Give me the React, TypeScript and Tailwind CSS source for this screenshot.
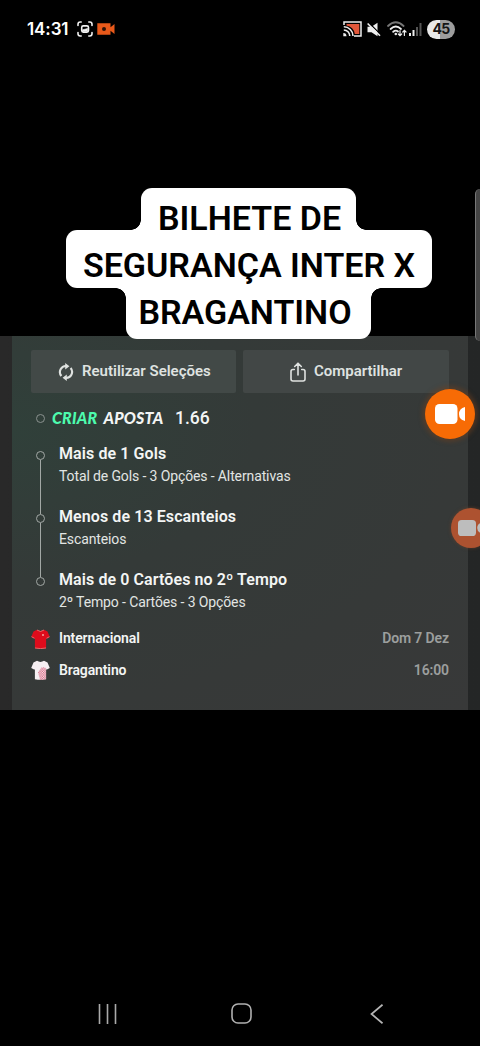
import React from 'react';

interface Selection {
  title: string;
  market: string;
}

const selections: Selection[] = [
  { title: 'Mais de 1 Gols', market: 'Total de Gols - 3 Opções - Alternativas' },
  { title: 'Menos de 13 Escanteios', market: 'Escanteios' },
  { title: 'Mais de 0 Cartões no 2º Tempo', market: '2º Tempo - Cartões - 3 Opções' },
];

function StatusBar() {
  return (
    <header className="flex h-[58px] shrink-0 items-center justify-between pl-[27px] pr-[25px]">
      <div className="flex items-center">
        <span className="w-[50px] font-['Inter'] text-[17px] font-semibold leading-none tracking-[-0.1px] text-white">14:31</span>
        {/* Screenshot */}
        <svg className="h-4 w-4" viewBox="0 0 16 16" fill="none" stroke="#f1f1f1" strokeWidth="1.6" strokeLinecap="round">
          <path d="M1 4.5V3.2Q1 1 3.2 1h1M11.8 1h1Q15 1 15 3.2v1.3M15 11.5v1.3q0 2.2-2.2 2.2h-1M4.2 15h-1Q1 15 1 12.8v-1.3" />
          <rect x="4.7" y="4.9" width="6.8" height="6.2" rx="1.6" />
          <path d="M5.5 10.200V8.800l2-.5 1.600-.4 1.400-.6v3z" fill="#f1f1f1" strokeWidth=".6" />
        </svg>
        <svg className="ml-[4px] h-[12px] w-[18px]" viewBox="0 0 18 12" fill="#e8591a">
          <path d="M.3.3h13.200v4L17.5 1v10l-4-3.300v4H.3z" />
          <circle cx="7" cy="6" r="2" fill="#2c1309" />
        </svg>
      </div>
      <div className="flex items-center">
        {/* Cast */}
        <svg className="h-[16px] w-[19px]" viewBox="0 0 19 16" fill="none">
          <path d="M1 4V1h17v14h-7" stroke="#eee" strokeWidth="1.5" />
          <path d="M3.5 3h12.800v10h-4.500Q10.500 5.500 3.500 4.500z" fill="#e2573a" />
          <path d="M.8 5.8A9.2 9.2 0 0 1 10 15M.8 9A6 6 0 0 1 6.8 15" stroke="#eee" strokeWidth="1.6" />
          <path d="M.3 12A3.3 3.3 0 0 1 3.5 15.3H.3z" fill="#eee" />
        </svg>
        {/* Muted */}
        <svg className="ml-[5px] h-[15px] w-[14px]" viewBox="0 0 14 15" fill="#eee">
          <path d="M.5 4.8h4L10.500.8v13.400L4.500 10.200h-4z" />
          <path d="M1.600.5 13.800 12.600" stroke="#000" strokeWidth="1.3" />
          <path d="M.6 1.500 13 13.800" stroke="#eee" strokeWidth="1.6" />
        </svg>
        {/* Wi-Fi */}
        <svg className="ml-[6px] h-[16px] w-[20px]" viewBox="0 0 20 16" fill="none" strokeWidth="1.8" strokeLinecap="round">
          <path d="M1 5Q8.8-2.5 16.6 5" stroke="#777" />
          <path d="M3.6 8Q8.8 3 14 8" stroke="#eee" />
          <path d="M6.2 10.800Q8.8 8.600 11 10.500" stroke="#eee" />
          <circle cx="8.8" cy="13" r="1.3" fill="#eee" />
          <path d="M13 9.500v5M11.300 13l1.700 1.700 1.700-1.700M17.400 14.500v-5M15.800 11l1.600-1.700L19 11" stroke="#eee" strokeWidth="1.2" />
        </svg>
        <svg className="ml-[2px] h-[13px] w-[13px]" viewBox="0 0 13 13">
          <path d="M0 10h2v3H0zM3.500 7h2v6h-2z" fill="#eee" />
          <path d="M7 4h2v9H7zM10.500 0h2v13h-2z" fill="#555" />
        </svg>
        <div className="ml-[5px] flex h-[19px] w-[28px] items-center justify-center rounded-full bg-linear-to-r from-[#e9e9e9] from-45% to-[#9d9d9d] to-45%">
          <span className="font-['Inter'] text-[14px] font-bold leading-none tracking-[-0.7px] text-[#151515]">45</span>
        </div>
      </div>
    </header>
  );
}

function Caption() {
  return (
    <h1 className="relative z-10 ml-[66px] mt-[130px] -mb-[3px] flex w-[366px] shrink-0 flex-col items-center font-['Roboto'] text-[34px] font-semibold leading-[47px] text-black">
      <span className="relative mr-px flex h-[42px] w-[215px] justify-center rounded-t-[11px] bg-white">
        <span className="relative left-[1px] top-[7px] z-10 whitespace-nowrap">BILHETE DE</span>
        <i className="absolute -left-[10px] bottom-0 size-[10px] bg-[radial-gradient(circle_at_top_left,transparent_9.5px,white_10px)]" />
        <i className="absolute -right-[10px] bottom-0 size-[10px] bg-[radial-gradient(circle_at_top_right,transparent_9.5px,white_10px)]" />
      </span>
      <span className="flex h-[58px] w-[366px] justify-center rounded-[11px] bg-white">
        <span className="relative top-[12px] whitespace-nowrap">SEGURANÇA INTER X</span>
      </span>
      <span className="relative mr-px flex h-[51px] w-[245px] justify-center rounded-b-[11px] bg-white">
        <span className="relative top-[1px] mr-[7px] whitespace-nowrap">BRAGANTINO</span>
        <i className="absolute -left-[10px] top-0 size-[10px] bg-[radial-gradient(circle_at_bottom_left,transparent_9.5px,white_10px)]" />
        <i className="absolute -right-[10px] top-0 size-[10px] bg-[radial-gradient(circle_at_bottom_right,transparent_9.5px,white_10px)]" />
      </span>
    </h1>
  );
}

function Shirt({ away = false }: { away?: boolean }) {
  return (
    <svg className="h-[20px] w-[19px]" viewBox="0 0 19 20">
      <defs>
        <pattern id="dots" width="2.4" height="2.4" patternUnits="userSpaceOnUse">
          <path d="M0 0h1.200v1.200H0zM1.200 1.200h1.200v1.200H1.200z" fill="#d8607e" />
        </pattern>
      </defs>
      <path
        d="M6 .8Q9.5 3 13 .8L16.5 2.5 18.8 8l-3.300 1.800-.4-.8v10.200q-5.600 1.200-11.200 0V9l-.4.8L.2 8l2.300-5.500z"
        fill={away ? '#f6eff2' : '#de0c1c'}
      />
      {away ? (
        <path d="M7 12l4-5 4.100 1v11.200q-4.500 1-6.100.6z" fill="url(#dots)" />
      ) : (
        <>
          <path d="M6 1Q9.500 4 13 1M.5 7.700l3 1.600M18.500 7.700l-3 1.600M4 19q5.500 1.200 11 0" fill="none" stroke="#f08b88" strokeWidth=".7" />
          <circle cx="12" cy="6" r=".9" fill="#f6b5b0" />
        </>
      )}
    </svg>
  );
}

function Camera({ className }: { className: string }) {
  return (
    <svg className={className} viewBox="0 0 30 20" fill="currentColor">
      <rect width="22.5" height="20" rx="4.5" />
      <path d="M30 3v14q-6-1.500-6-7t6-7z" />
    </svg>
  );
}

function BetSlip() {
  return (
    <main className="flex h-[374px] shrink-0 bg-linear-to-r from-[#292929] to-[#242626] pl-[12px] pr-[12px]">
      <div className="flex w-[456px] flex-col bg-[radial-gradient(ellipse_at_0%_25%,#30403a_0%,#343a38_38%,#363938_70%,#383939_100%)] pl-[19px] pr-[19px] pt-[14px] font-['Roboto'] text-[#f3f5f4]">
        <div className="flex gap-[7px]">
          <button className="flex h-[43px] w-[205px] items-center rounded-[2px] bg-[#424947] pl-[27px] text-[15px] font-semibold text-[#dfe2e0]">
            <svg className="mr-[8px] h-[18px] w-[16px]" viewBox="0 0 16 18" fill="none" stroke="currentColor" strokeWidth="2.1">
              <path d="M3.400 13A6 6 0 0 1 8.500 3.100M12.600 5A6 6 0 0 1 7.500 14.900" />
              <path d="M7.200 0l4.200 3.200-4.200 3.200zM8.800 11.600v6.400l-4.200-3.200z" fill="currentColor" stroke="none" />
            </svg>
            <span className="whitespace-nowrap">Reutilizar Seleções</span>
          </button>
          <button className="flex h-[43px] w-[206px] items-center rounded-[2px] bg-[#424746] pl-[47px] text-[15px] font-semibold text-[#dfe2e0]">
            <svg className="mr-[8px] h-[20px] w-[16px]" viewBox="0 0 16 20" fill="none" stroke="currentColor" strokeWidth="1.6" strokeLinecap="round" strokeLinejoin="round">
              <path d="M4.300 7.500H3q-2 0-2 2V17q0 2 2 2h10q2 0 2-2V9.500q0-2-2-2h-1.300M8 13V1.500M4.700 4.500 8 1.200l3.300 3.300" />
            </svg>
            <span>Compartilhar</span>
          </button>
        </div>

        <div className="flex h-[50px] items-center pl-[5px]">
          <span className="size-[9px] rounded-full border border-[#8a918e]" />
          <span className="ml-[7px] flex w-[123px] gap-[6px] whitespace-nowrap font-['Lato'] text-[16px] font-black italic tracking-[0.2px]">
            <span className="text-[#4dfbae]">CRIAR</span>
            <span>APOSTA</span>
          </span>
          <span className="text-[17.5px] font-medium">1.66</span>
        </div>

        <ul>
          {selections.map((selection, index) => (
            <li key={selection.title} className="flex h-[63px]">
              <div className="flex w-[28px] flex-col pl-[5px] pt-[8px]">
                <span className="size-[9px] shrink-0 rounded-full border border-[#a2a8a5]" />
                {index < selections.length - 1 && <span className="-mb-[8px] ml-[4px] w-px flex-1 bg-[#a2a8a5]" />}
              </div>
              <div className="whitespace-nowrap">
                <p className="text-[16px] font-semibold leading-[21px] tracking-[0.09px]">{selection.title}</p>
                <p className="mt-[2px] text-[14px] leading-[20px] tracking-[-0.12px] text-[#e2e5e3]">{selection.market}</p>
              </div>
            </li>
          ))}
        </ul>

        <div className="-mt-[9px] flex flex-col text-[14px] font-semibold tracking-[-0.12px]">
          <div className="flex h-[31px] items-center">
            <Shirt />
            <span className="ml-[9px] flex-1">Internacional</span>
            <span className="text-[#9c9f9e]">Dom 7 Dez</span>
          </div>
          <div className="flex h-[32px] items-center">
            <Shirt away />
            <span className="ml-[9px] flex-1">Bragantino</span>
            <span className="text-[#9c9f9e]">16:00</span>
          </div>
        </div>
      </div>
    </main>
  );
}

export default function App() {
  return (
    <div className="relative flex h-[1046px] w-[480px] flex-col overflow-hidden bg-black">
      <StatusBar />
      <Caption />
      <BetSlip />

      <nav className="mt-auto flex h-[65px] items-center justify-between pl-[98px] pr-[97px]">
        <svg className="h-[20px] w-[19px]" viewBox="0 0 19 20" stroke="#aaa" strokeWidth="1.6">
          <path d="M1.500 0v20M9.500 0v20M17.500 0v20" />
        </svg>
        <svg className="mr-[4px] size-[21px]" viewBox="0 0 21 21" fill="none" stroke="#b0b0b0" strokeWidth="1.6">
          <rect x="1" y="1" width="19" height="19" rx="6" />
        </svg>
        <svg className="h-[20px] w-[13px]" viewBox="0 0 13 20" fill="none" stroke="#b5b5b5" strokeWidth="1.7">
          <path d="M12.500.7 1.500 10l11 9.300" />
        </svg>
      </nav>

      {/* Edge panel handle */}
      <div className="absolute right-0 top-[189px] z-20 h-[152px] w-[5px] rounded-l-[5px] border-l border-[#777] bg-[#444]" />

      {/* Floating recorder buttons */}
      <div className="absolute left-[425px] top-[389px] flex size-[50px] items-center justify-center rounded-full bg-[#f76b05] text-white shadow-[0_0_4px_3px_#70401d80]">
        <Camera className="h-[20px] w-[30px]" />
      </div>
      <div className="absolute left-[451px] top-[508px] flex size-[40px] items-center rounded-full bg-[#ad5230] pl-[7px] text-[#bdbdbd] shadow-[0_0_3px_1px_#68412c80]">
        <Camera className="h-[16px] w-[24px]" />
      </div>
    </div>
  );
}
